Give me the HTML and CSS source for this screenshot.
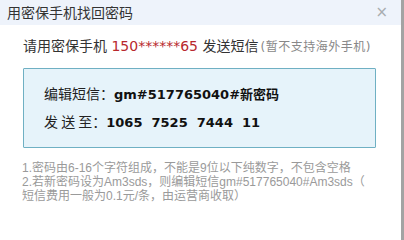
FILE: index.html
```html
<!DOCTYPE html>
<html lang="zh-CN">
<head>
<meta charset="utf-8">
<title>用密保手机找回密码</title>
<link rel="stylesheet" href="styles.css">
</head>
<body>
<div class="frame">
  <div class="dialog">
    <div class="header">
      <span class="title">用密保手机找回密码</span>
      <span class="close">×</span>
    </div>
    <div class="content">
      <p class="lead">请用密保手机 <span class="phone">150******65</span> 发送短信<span class="note">(暂不支持海外手机)</span></p>
      <div class="smsbox">
        <div class="smsrow"><span class="label">编辑短信：</span><b class="val">gm#517765040#新密码</b></div>
        <div class="smsrow"><span class="label">发 送 至：</span><b class="val">1065&nbsp;&nbsp;7525&nbsp;&nbsp;7444&nbsp;&nbsp;11</b></div>
      </div>
      <div class="hints">
        <p>1.密码由6-16个字符组成，不能是9位以下纯数字，不包含空格</p>
        <p>2.若新密码设为Am3sds，则编辑短信gm#517765040#Am3sds（</p>
        <p>短信费用一般为0.1元/条，由运营商收取）</p>
      </div>
    </div>
  </div>
  <div class="edge"></div>
</div>
</body>
</html>
```

FILE: styles.css
```css
html, body {
  margin: 0;
  padding: 0;
  background: #ffffff;
}
body {
  font-family: "DejaVu Sans", "Noto Sans CJK SC", sans-serif;
  color: #333333;
}
.frame {
  display: flex;
  width: 404px;
  height: 240px;
  overflow: hidden;
}
.dialog {
  flex: 1;
  min-width: 0;
}
.edge {
  width: 3px;
  background: #a3a3a3;
}
.header {
  height: 25px;
  background: #eef3fb;
  display: flex;
  align-items: center;
  justify-content: space-between;
  padding: 0 13px 0 7px;
}
.title {
  font-family: "Noto Sans CJK SC", sans-serif;
  font-size: 14px;
  color: #333333;
  line-height: 25px;
}
.close {
  font-family: "DejaVu Sans", sans-serif;
  font-size: 15px;
  color: #a8acb0;
  line-height: 25px;
}
.content {
  padding: 0 25px 0 22px;
}
.lead {
  margin: 11px 0 0 1px;
  font-size: 14px;
  line-height: 20px;
  color: #333333;
  white-space: nowrap;
}
.phone {
  color: #b8282d;
}
.note {
  font-size: 12px;
  color: #888888;
  margin-left: 2px;
  letter-spacing: 0.5px;
}
.smsbox {
  margin: 11px 0 0 1px;
  border: 1px solid #6fb0c3;
  background: #e6f3fa;
  border-radius: 1px;
  padding: 11px 20px 11px 20px;
}
.smsrow {
  font-size: 14px;
  line-height: 26px;
  white-space: nowrap;
  color: #222222;
}
.label {
  font-family: "Noto Sans CJK SC", sans-serif;
}
.val {
  font-size: 13px;
  font-weight: bold;
  color: #111111;
}
.hints {
  margin-top: 13px;
  font-family: "Liberation Sans", "Noto Sans CJK SC", sans-serif;
  font-size: 12px;
  line-height: 14px;
  color: #9a9a9a;
  white-space: nowrap;
}
.hints p {
  margin: 0;
}
```
